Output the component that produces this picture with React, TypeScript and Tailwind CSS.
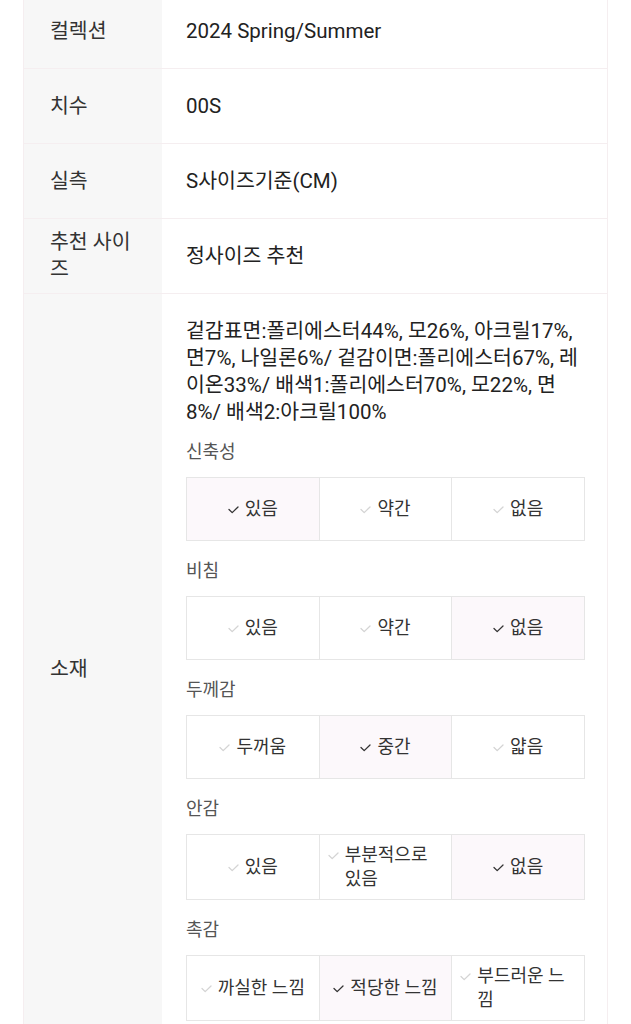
import React from "react";

type Opt = { label: string; selected?: boolean };

const rows = [
  { label: "컬렉션", value: "2024 Spring/Summer" },
  { label: "치수", value: "00S" },
  { label: "실측", value: "S사이즈기준(CM)" },
  { label: "추천 사이즈", value: "정사이즈 추천" },
];

const groups: { title: string; options: Opt[] }[] = [
  {
    title: "신축성",
    options: [{ label: "있음", selected: true }, { label: "약간" }, { label: "없음" }],
  },
  {
    title: "비침",
    options: [{ label: "있음" }, { label: "약간" }, { label: "없음", selected: true }],
  },
  {
    title: "두께감",
    options: [{ label: "두꺼움" }, { label: "중간", selected: true }, { label: "얇음" }],
  },
  {
    title: "안감",
    options: [{ label: "있음" }, { label: "부분적으로 있음" }, { label: "없음", selected: true }],
  },
  {
    title: "촉감",
    options: [
      { label: "까실한 느낌" },
      { label: "적당한 느낌", selected: true },
      { label: "부드러운 느낌" },
    ],
  },
];

const Check = ({ on }: { on?: boolean }) => (
  <svg
    width="11"
    height="8"
    viewBox="0 0 11 8"
    className="mt-[9px] shrink-0"
    fill="none"
    stroke={on ? "#333333" : "#d4d4d4"}
    strokeWidth="1.3"
    strokeLinecap="round"
    strokeLinejoin="round"
  >
    <path d="M1 3.5L4.2 6.6L10 1" />
  </svg>
);

const OptionGroup = ({ title, options, first }: { title: string; options: Opt[]; first?: boolean }) => (
  <div>
    <p className={`${first ? "mt-[14px]" : "mt-[18px]"} mb-[13px] text-[18px] leading-[24px] text-[#555]`}>
      {title}
    </p>
    <div className="grid grid-cols-3 border-t border-l border-[#e6e6e6]">
      {options.map((o) => (
        <div
          key={o.label}
          className={`flex min-h-[63px] items-center justify-center border-r border-b border-[#e6e6e6] px-2 py-2 ${
            o.selected ? "bg-[#fcf8fb]" : "bg-white"
          }`}
        >
          <div className="flex items-start gap-[6px]">
            <Check on={o.selected} />
            <span className="text-[18px] leading-[24px] text-[#333]">{o.label}</span>
          </div>
        </div>
      ))}
    </div>
  </div>
);

export default function App() {
  return (
    <div
      className="min-h-screen bg-white text-[#222]"
      style={{ fontFamily: 'Roboto, "Noto Sans CJK KR", sans-serif' }}
    >
      <div className="mx-[23px] -mt-[6px] border-x border-[#f5eef0]">
        {rows.map((r) => (
          <div key={r.label} className="flex min-h-[75px] border-b border-[#f5eef0]">
            <div className="flex w-[138px] shrink-0 items-center bg-[#f7f7f7] py-[10px] pl-[26px] pr-4 text-[20.5px] leading-[27px] text-[#333]">
              {r.label}
            </div>
            <div className="flex flex-1 items-center py-[10px] pl-[24px] pr-[22px] text-[20.5px] leading-[27px]">
              {r.value}
            </div>
          </div>
        ))}
        <div className="flex border-b border-[#f5eef0]">
          <div className="flex w-[138px] shrink-0 items-center bg-[#f7f7f7] pl-[26px] pr-4 text-[20.5px] leading-[27px] text-[#333]">
            소재
          </div>
          <div className="flex-1 pt-6 pb-6 pl-[24px] pr-[22px]">
            <p className="text-[20.5px] leading-[27px]">
              겉감표면:폴리에스터44%, 모26%, 아크릴17%, 면7%, 나일론6%/ 겉감이면:폴리에스터67%, 레이온33%/ 배색1:폴리에스터70%, 모22%, 면8%/ 배색2:아크릴100%
            </p>
            {groups.map((g, i) => (
              <OptionGroup key={g.title} title={g.title} options={g.options} first={i === 0} />
            ))}
          </div>
        </div>
      </div>
    </div>
  );
}
